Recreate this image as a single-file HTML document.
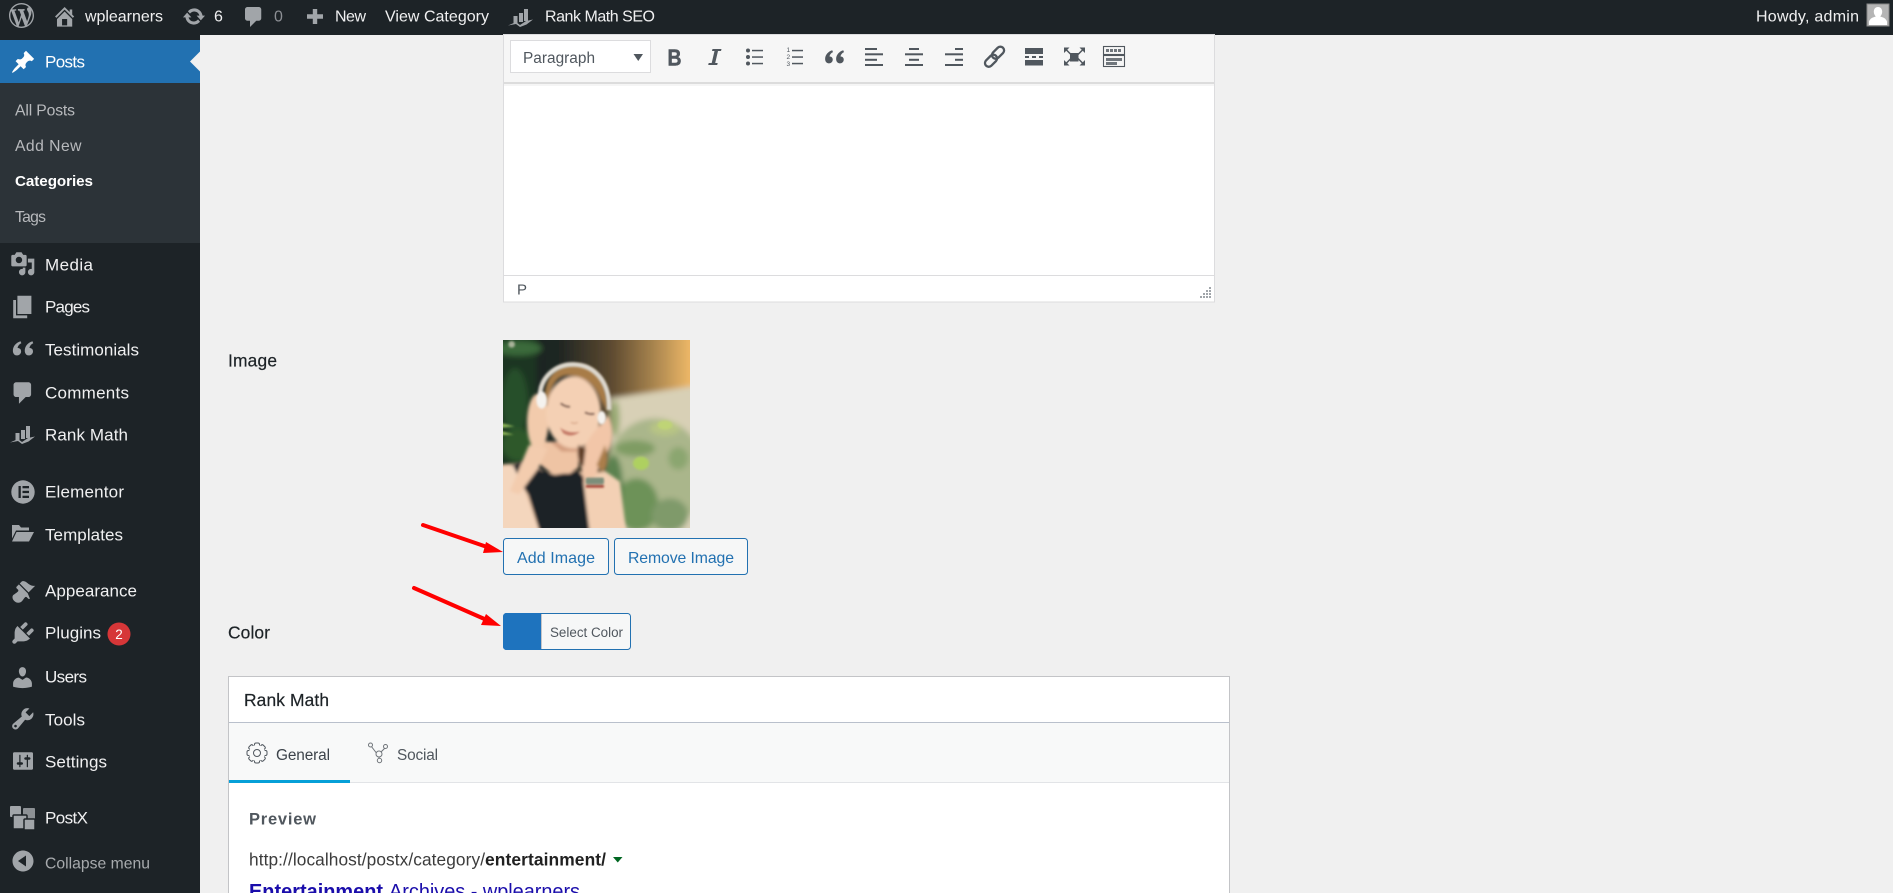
<!DOCTYPE html>
<html lang="en">
<head>
<meta charset="utf-8">
<title>Edit Category</title>
<style>
html,body{margin:0;padding:0;background:#f0f0f0;overflow:hidden}
svg{display:block;font-family:"Liberation Sans",Arial,sans-serif}
.m{font-size:17px;fill:#f0f0f1}
.s{font-size:15.7px;fill:#b8babd}
.a{font-size:16px;fill:#f0f0f1}
.i{fill:#a1a5a9}
.t{fill:#50575e}
</style>
</head>
<body>
<svg width="1893" height="893" viewBox="0 0 1893 893" xmlns="http://www.w3.org/2000/svg">
<defs>
<filter id="b" x="-5%" y="-5%" width="110%" height="110%"><feGaussianBlur stdDeviation="9"/></filter>
<filter id="p" x="-5%" y="-5%" width="110%" height="110%"><feGaussianBlur stdDeviation="5"/></filter>
<filter id="b2" x="-5%" y="-5%" width="110%" height="110%"><feGaussianBlur stdDeviation="3"/></filter>
<clipPath id="ic"><rect x="24" y="15" width="561" height="564"/></clipPath>
<linearGradient id="sky" gradientUnits="userSpaceOnUse" x1="24" x2="585" y1="0" y2="0"><stop offset="0" stop-color="#15231b"/><stop offset=".3" stop-color="#1f2523"/><stop offset=".58" stop-color="#5d4a30"/><stop offset=".82" stop-color="#ad8850"/><stop offset="1" stop-color="#edb767"/></linearGradient>
<path id="quote" d="M8.200 5C5 6 2.500 8.600 2.500 12c0 2 1.200 3.500 3 3.500S8.600 14.200 8.600 12.500 7.400 10 6 10c.2-1.500 1.200-2.800 2.800-3.500zM17 5c-3.200 1-5.700 3.600-5.700 7 0 2 1.200 3.500 3 3.500s3.100-1.300 3.100-3S16.200 10 14.800 10c.2-1.500 1.200-2.800 2.800-3.500z"/>
<path id="cmt" d="M5 2h9c1.100 0 2 .9 2 2v7c0 1.100-.9 2-2 2h-2l-5 5v-5H5c-1.100 0-2-.9-2-2V4c0-1.100.9-2 2-2z"/>
<g id="rm"><rect x="5.500" y="7" width="4" height="7"/><rect x="11" y="4" width="4" height="9"/><rect x="16" y="0" width="4" height="12"/><path d="M0 16.500L8 13l4 3 6-4 7-1.500-6.500 5L12 18 8 15z"/></g>
</defs>

<!-- page -->
<rect width="1893" height="893" fill="#f0f0f0"/>

<!-- admin bar -->
<rect width="1893" height="35" fill="#1d2327"/>
<g class="i">
<g transform="translate(9,3) scale(1.250)"><path d="M20 10c0-5.510-4.490-10-10-10C4.480 0 0 4.490 0 10c0 5.520 4.480 10 10 10 5.510 0 10-4.480 10-10zM7.780 15.370L4.370 6.220c.55-.02 1.170-.08 1.170-.08.5-.06.44-1.130-.06-1.110 0 0-1.450.11-2.370.11-.18 0-.37 0-.58-.01C4.120 2.690 6.870 1.110 10 1.110c2.330 0 4.450.87 6.050 2.340-.68-.11-1.650.39-1.650 1.580 0 .74.45 1.360.9 2.100.35.61.55 1.360.55 2.460 0 1.490-1.400 5-1.400 5l-3.030-8.370c.54-.02.82-.17.82-.17.5-.05.44-1.250-.06-1.220 0 0-1.440.12-2.380.12-.87 0-2.330-.12-2.330-.12-.5-.03-.56 1.200-.06 1.220l.92.08 1.260 3.410zM17.410 10c.24-.64.74-1.870.43-4.250.7 1.290 1.050 2.710 1.050 4.250 0 3.290-1.730 6.240-4.400 7.780.97-2.590 1.940-5.200 2.920-7.780zM6.100 18.090C3.120 16.650 1.110 13.530 1.110 10c0-1.300.23-2.480.72-3.590C3.250 10.300 4.670 14.200 6.100 18.090zm4.030-6.630l2.580 6.980c-.86.29-1.760.45-2.710.45-.79 0-1.570-.11-2.290-.33.81-2.380 1.620-4.740 2.420-7.100z"/></g>
<g transform="translate(51.900,3.800) scale(1.270)"><path d="M16 8.500l1.530 1.530-1.060 1.060L10 4.620l-6.470 6.470-1.060-1.060L10 2.500l4 4v-2h2v4zm-6-2.460l6 5.990V18H4v-5.970zM12 17v-5H8v5h4z"/></g>
<g transform="translate(182,4.500) scale(1.200)"><path d="M10.200 3.280c3.530 0 6.430 2.610 6.920 6h2.080l-3.500 4-3.500-4h2.320c-.45-1.970-2.210-3.450-4.320-3.450-1.450 0-2.730.71-3.540 1.780L4.950 5.660C6.230 4.200 8.110 3.280 10.200 3.280zm-.4 13.440c-3.520 0-6.430-2.610-6.920-6H.8l3.500-4c1.170 1.330 2.330 2.670 3.500 4H5.480c.45 1.970 2.210 3.450 4.320 3.450 1.450 0 2.730-.71 3.540-1.780l1.710 1.950c-1.280 1.460-3.150 2.380-5.250 2.380z"/></g>
<g transform="translate(241.250,4.500) scale(1.250)"><use href="#cmt"/></g>
<path d="M312.800 9h4.400v5.300h5.800v4.400h-5.800V24h-4.400v-5.300H307v-4.400h5.800z"/>
<g transform="translate(508,9)"><use href="#rm"/></g>
</g>
<text class="a" x="85" y="21.500" textLength="78" lengthAdjust="spacing">wplearners</text>
<text class="a" x="214" y="21.500" textLength="9">6</text>
<text class="a" x="274" y="21.500" textLength="9" style="fill:#8c8f94">0</text>
<text class="a" x="335" y="21.500" textLength="31" lengthAdjust="spacing">New</text>
<text class="a" x="385" y="21.500" textLength="104" lengthAdjust="spacing">View Category</text>
<text class="a" x="545" y="21.500" textLength="110" lengthAdjust="spacing">Rank Math SEO</text>
<text class="a" x="1756" y="21.500" textLength="103" lengthAdjust="spacing">Howdy, admin</text>
<rect x="1867" y="4" width="22" height="22" fill="#b5b5b5" stroke="#888" stroke-width="1"/>
<path d="M1878 7c2.800 0 4.200 2.200 4.200 4.800 0 2-1 3.700-2 4.700 3 .8 5.800 2 6.800 5v3.500h-18V21.500c1-3 3.800-4.200 6.800-5-1-1-2-2.700-2-4.700 0-2.600 1.400-4.800 4.200-4.800z" fill="#fff"/>

<!-- sidebar -->
<rect y="35" width="200" height="858" fill="#1d2327"/>
<rect y="40" width="200" height="43" fill="#2271b1"/>
<path d="M200 51.500l-10 10 10 10z" fill="#f0f0f0"/>
<rect y="83" width="200" height="160" fill="#2c3338"/>
<g transform="translate(10.300,49.200) scale(1.280)" fill="#fff"><path d="M10.440 3.020l1.820-1.820 6.360 6.350-1.830 1.820c-1.050-.68-2.480-.57-3.410.36l-.75.75c-.92.93-1.040 2.350-.35 3.410l-1.830 1.820-2.410-2.410-2.800 2.790c-.42.42-3.380 2.710-3.800 2.290s1.860-3.390 2.280-3.810l2.790-2.790L4.100 9.360l1.830-1.820c1.050.69 2.480.57 3.400-.36l.75-.75c.93-.92 1.050-2.350.36-3.410z"/></g>
<text class="m" x="45" y="67.500" textLength="40" lengthAdjust="spacing" style="fill:#fff">Posts</text>
<text class="s" x="15" y="115.500" textLength="60" lengthAdjust="spacing">All Posts</text>
<text class="s" x="15" y="151" textLength="66.500" lengthAdjust="spacing">Add New</text>
<text class="s" x="15" y="186" textLength="78" lengthAdjust="spacing" style="fill:#fff;font-weight:700;font-size:15.200px">Categories</text>
<text class="s" x="15" y="222" textLength="31" lengthAdjust="spacing">Tags</text>

<g class="i">
<g transform="translate(10,251) scale(1.280)"><path d="M13 11V4c0-.55-.45-1-1-1h-1.670L9 1H5L3.670 3H2c-.55 0-1 .45-1 1v7c0 .55.45 1 1 1h10c.55 0 1-.45 1-1zM7 4.500c1.380 0 2.500 1.120 2.500 2.500S8.380 9.500 7 9.500 4.500 8.380 4.500 7 5.620 4.500 7 4.500zM14 6h5v10.500c0 1.380-1.120 2.500-2.500 2.500S14 17.880 14 16.500s1.120-2.500 2.500-2.500c.17 0 .34.02.5.05V9h-3V6zm-4 8.050V13h2v3.500c0 1.380-1.120 2.500-2.500 2.500S7 17.880 7 16.500 8.120 14 9.500 14c.17 0 .34.02.5.05z"/></g>
<g transform="translate(9,293) scale(1.400)"><path d="M6 15V2h10v13H6zm-1 1h8v2H3V5h2v11z"/></g>
<g transform="translate(9.500,334.500) scale(1.350)"><use href="#quote"/></g>
<g transform="translate(9.500,379.500) scale(1.350)"><use href="#cmt"/></g>
<g transform="translate(10,426)"><use href="#rm"/></g>
<g><circle cx="23" cy="492" r="11.700"/><rect x="18.500" y="486" width="2.300" height="12" fill="#1d2327"/><rect x="22.500" y="486" width="6.500" height="2.300" fill="#1d2327"/><rect x="22.500" y="490.800" width="6.500" height="2.300" fill="#1d2327"/><rect x="22.500" y="495.700" width="6.500" height="2.300" fill="#1d2327"/></g>
<path d="M12 525h7l2 2.500h8v3H16l-4 8zM16.500 532h17.500l-5 9.500H12z"/>
<g transform="translate(10.500,578.500) scale(1.250)"><path d="M14.480 11.060L7.410 3.990l1.500-1.500c.5-.56 2.300-.47 3.510.32 1.210.8 1.430 1.280 2.910 2.100 1.180.64 2.450 1.260 4.450.85zm-.71.71L6.700 4.700 4.930 6.470c-.39.39-.39 1.020 0 1.410l1.060 1.060c.39.39.39 1.030 0 1.420-.6.6-1.430 1.110-2.210 1.690-.35.26-.7.53-1.010.84C1.430 13.230.91 15.960 3 18c2.040 2.090 4.770 1.570 6.110.22.31-.31.58-.66.84-1.010.58-.78 1.090-1.610 1.690-2.210.39-.39 1.030-.39 1.420 0l1.060 1.060c.39.39 1.020.39 1.410 0z"/></g>
<g transform="translate(9,619) scale(1.400)"><path d="M13.110 4.360L9.870 7.600 8 5.730l3.240-3.240c.35-.34 1.050-.2 1.560.32.52.51.66 1.210.31 1.550zm-8 1.770l.91-1.120 9.010 9.010-1.190.84c-.71.71-2.630 1.160-3.820 1.160H6.140L4.900 17.260c-.59.59-1.540.59-2.120 0-.59-.58-.59-1.530 0-2.120l1.240-1.240v-3.880c0-1.130.4-3.190 1.090-3.890zm7.260 3.970l3.240-3.240c.34-.35 1.040-.21 1.550.31.52.51.66 1.210.31 1.550l-3.240 3.250z"/></g>
<g transform="translate(9.500,664.500) scale(1.300)"><path d="M10 9.250c-2.270 0-2.730-3.440-2.730-3.440C7 4.020 7.820 2 9.970 2c2.160 0 2.980 2.020 2.710 3.810 0 0-.41 3.440-2.680 3.440zm0 2.570L12.720 10c2.390 0 4.520 2.330 4.520 4.530v2.490s-3.650 1.130-7.240 1.130c-3.650 0-7.240-1.130-7.240-1.130v-2.490c0-2.250 1.940-4.480 4.470-4.480z"/></g>
<g transform="translate(9.500,705.500) scale(1.330)"><path d="M16.680 9.770c-1.340 1.340-3.300 1.670-4.950.99l-5.410 6.520c-.99.99-2.590.99-3.580 0s-.99-2.590 0-3.570l6.520-5.420c-.68-1.650-.35-3.610.99-4.950 1.280-1.280 3.120-1.620 4.720-1.060l-2.890 2.890 2.820 2.820 2.860-2.870c.53 1.580.18 3.390-1.080 4.650zM3.810 16.210c.4.390 1.040.39 1.430 0 .4-.4.4-1.040 0-1.440-.39-.39-1.030-.39-1.430 0-.39.4-.39 1.040 0 1.440z"/></g>
<g transform="translate(10.500,748.500) scale(1.250)"><path d="M18 16V4c0-.55-.45-1-1-1H3c-.55 0-1 .45-1 1v12c0 .55.45 1 1 1h14c.55 0 1-.45 1-1zM8 11h1c.55 0 1 .45 1 1s-.45 1-1 1H8v1.500c0 .28-.22.5-.5.5s-.5-.22-.5-.5V13H6c-.55 0-1-.45-1-1s.45-1 1-1h1V5.500c0-.28.22-.5.5-.5s.5.22.5.5V11zm5-2h-1c-.55 0-1-.45-1-1s.45-1 1-1h1V5.500c0-.28.22-.5.5-.5s.5.22.5.5V7h1c.55 0 1 .45 1 1s-.45 1-1 1h-1v5.500c0 .28-.22.5-.5.5s-.5-.22-.5-.5V9z"/></g>
<g><rect x="10" y="806" width="11" height="11" rx="1"/><rect x="23" y="808" width="12" height="11"  rx="1" opacity=".85"/><rect x="13" y="815" width="14" height="14" rx="1" stroke="#1d2327" stroke-width="1.500"/><rect x="24" y="819" width="11" height="11" rx="1" stroke="#1d2327" stroke-width="1.500"/></g>
<path fill-rule="evenodd" d="M23 850.500c5.800 0 10.500 4.700 10.500 10.500s-4.700 10.500-10.500 10.500-10.500-4.700-10.500-10.500 4.700-10.500 10.500-10.500zM26 855.500l-8 5.500 8 5.500z"/>
</g>
<text class="m" x="45" y="270.500" textLength="48" lengthAdjust="spacing">Media</text>
<text class="m" x="45" y="312.500" textLength="45" lengthAdjust="spacing">Pages</text>
<text class="m" x="45" y="355.500" textLength="94" lengthAdjust="spacing">Testimonials</text>
<text class="m" x="45" y="398.500" textLength="84" lengthAdjust="spacing">Comments</text>
<text class="m" x="45" y="440.500" textLength="83" lengthAdjust="spacing">Rank Math</text>
<text class="m" x="45" y="497.500" textLength="79" lengthAdjust="spacing">Elementor</text>
<text class="m" x="45" y="540.500" textLength="78" lengthAdjust="spacing">Templates</text>
<text class="m" x="45" y="596.500" textLength="92" lengthAdjust="spacing">Appearance</text>
<text class="m" x="45" y="638.500" textLength="56" lengthAdjust="spacing">Plugins</text>
<circle cx="119" cy="634" r="11.500" fill="#d63638"/>
<text x="119" y="639" text-anchor="middle" font-size="13.500" fill="#fff">2</text>
<text class="m" x="45" y="682.500" textLength="42" lengthAdjust="spacing">Users</text>
<text class="m" x="45" y="725.500" textLength="40" lengthAdjust="spacing">Tools</text>
<text class="m" x="45" y="767.500" textLength="62" lengthAdjust="spacing">Settings</text>
<text class="m" x="45" y="823.500" textLength="43" lengthAdjust="spacing">PostX</text>
<text class="s" x="45" y="868.500" textLength="105" lengthAdjust="spacing" style="fill:#a7aaad">Collapse menu</text>

<!-- editor -->
<rect x="503.500" y="34.500" width="711" height="267.500" fill="#fff" stroke="#dcdcde"/>
<rect x="504" y="35" width="710" height="47" fill="#f6f6f6"/>
<rect x="504" y="82" width="710" height="2" fill="#dcdcdc"/>
<rect x="504" y="84" width="710" height="2" fill="#f5f5f5"/>
<rect x="510.500" y="40.500" width="140" height="32" fill="#fff" stroke="#dcdcde"/>
<text x="523" y="63" font-size="15.400" fill="#50575e" textLength="72" lengthAdjust="spacing">Paragraph</text>
<path d="M633.500 54h9.500l-4.750 7z" fill="#50575e"/>
<text x="667.500" y="65.500" font-size="23" font-weight="700" fill="#50575e" stroke="#50575e" stroke-width=".5" textLength="14" lengthAdjust="spacingAndGlyphs">B</text>
<g class="t">
<path d="M712.500 49h9l-.5 2h-3l-2.800 12h2.500l-.5 2h-9l.5-2h3l2.800-12h-2.500z"/>
<circle cx="748" cy="50.500" r="2"/><circle cx="748" cy="57" r="2"/><circle cx="748" cy="63.500" r="2"/>
<rect x="752" y="49.800" width="11" height="1.500"/><rect x="752" y="56.300" width="11" height="1.500"/><rect x="752" y="62.800" width="11" height="1.500"/>
<text x="786.500" y="52" font-size="6.500">1</text><text x="786.500" y="59" font-size="6.500">2</text><text x="786.500" y="66" font-size="6.500">3</text>
<rect x="792" y="49.800" width="11" height="1.500"/><rect x="792" y="56.300" width="11" height="1.500"/><rect x="792" y="62.800" width="11" height="1.500"/>
<g transform="translate(822,44) scale(1.250)"><use href="#quote"/></g>
<rect x="865" y="48" width="12" height="2"/><rect x="865" y="53.300" width="18" height="2"/><rect x="865" y="58.800" width="12" height="2"/><rect x="865" y="64" width="18" height="2"/>
<rect x="909" y="48" width="10" height="2"/><rect x="905" y="53.300" width="18" height="2"/><rect x="909" y="58.800" width="10" height="2"/><rect x="905" y="64" width="18" height="2"/>
<rect x="955" y="48" width="8" height="2"/><rect x="945" y="53.300" width="18" height="2"/><rect x="955" y="58.800" width="8" height="2"/><rect x="945" y="64" width="18" height="2"/>
<rect x="1025" y="48" width="18" height="6"/><rect x="1025" y="56" width="4" height="2"/><rect x="1032" y="56" width="4" height="2"/><rect x="1039" y="56" width="4" height="2"/><rect x="1025" y="60" width="18" height="5.500"/>
<rect x="1070" y="53" width="8.500" height="8.500"/>
<path d="M1064 47.500h5.500l-5.500 5.500zM1085 47.500v5.500l-5.500-5.500zM1064 65.500v-5.500l5.500 5.500zM1085 65.500h-5.500l5.500-5.500z"/>
<path d="M1066 49.500l5 5M1083 49.500l-5 5M1066 63.500l5-5M1083 63.500l-5-5" stroke="#50575e" stroke-width="1.500"/>
<g fill="none" stroke="#50575e" stroke-width="1.100"><rect x="1103.500" y="46.500" width="21" height="8"/><rect x="1103.500" y="55.500" width="21" height="11"/></g>
<g fill="#70767c"><rect x="1106" y="49" width="3" height="3"/><rect x="1110" y="49" width="3" height="3"/><rect x="1114" y="49" width="3" height="3"/><rect x="1118" y="49" width="3" height="3"/><rect x="1106" y="58" width="16" height="3"/><rect x="1106" y="62" width="11" height="3"/></g>
</g>
<g fill="none" stroke="#50575e" stroke-width="2.300"><rect x="984" y="57" width="14" height="7.500" rx="3.700" transform="rotate(-45 991 60.700)"/><rect x="991" y="49" width="14" height="7.500" rx="3.700" transform="rotate(-45 998 52.700)"/></g>
<rect x="504" y="275" width="710" height="1" fill="#dcdcde"/>
<text x="517" y="294.500" font-size="15" fill="#50575e">P</text>
<g fill="#a0a5aa"><rect x="1209" y="287" width="2" height="2"/><rect x="1206" y="290" width="2" height="2"/><rect x="1209" y="290" width="2" height="2"/><rect x="1203" y="293" width="2" height="2"/><rect x="1206" y="293" width="2" height="2"/><rect x="1209" y="293" width="2" height="2"/><rect x="1200" y="296" width="2" height="2"/><rect x="1203" y="296" width="2" height="2"/><rect x="1206" y="296" width="2" height="2"/><rect x="1209" y="296" width="2" height="2"/></g>

<!-- image row -->
<text x="228" y="366.500" font-size="17.400" fill="#1d2327" stroke="#1d2327" stroke-width=".2" textLength="49" lengthAdjust="spacing">Image</text>
<g transform="translate(495,335) scale(.33333)" clip-path="url(#ic)">
<g filter="url(#b)">
<rect x="-40" y="-40" width="700" height="700" fill="url(#sky)"/>
<path d="M345 190L640 147V660H345z" fill="#d8d0b6"/>
<rect x="-40" y="-40" width="165" height="435" fill="#1a3523"/>
<ellipse cx="70" cy="40" rx="70" ry="22" fill="#3a6a3a"/>
<ellipse cx="60" cy="200" rx="38" ry="100" fill="#264f2a"/>
<ellipse cx="70" cy="330" rx="50" ry="50" fill="#2e582c"/>
<ellipse cx="480" cy="420" rx="150" ry="170" fill="#aab68b"/>
<ellipse cx="420" cy="340" rx="60" ry="24" fill="#7f9c63"/>
<ellipse cx="510" cy="280" rx="45" ry="22" fill="#b8c584"/>
<ellipse cx="550" cy="370" rx="30" ry="34" fill="#8ba66f"/>
<ellipse cx="425" cy="510" rx="65" ry="80" fill="#6d9258"/>
<ellipse cx="525" cy="540" rx="55" ry="50" fill="#7f9a6a"/>
<ellipse cx="360" cy="250" rx="14" ry="55" fill="#99aa73"/>
<ellipse cx="355" cy="450" rx="28" ry="90" fill="#5b8250"/>
</g>
<g filter="url(#b2)">
<path d="M10 262l49 12-49 6zM10 285l46 14-46 2z" fill="#8ab257"/>
<ellipse cx="50" cy="28" rx="10" ry="10" fill="#a9b39a"/>
<ellipse cx="438" cy="385" rx="24" ry="20" fill="#aed060"/>
<ellipse cx="510" cy="270" rx="22" ry="14" fill="#bfd476"/>
</g>
<g filter="url(#p)">
<path d="M-20 392L60 385 105 372 150 415 250 410 330 410 300 640H-20z" fill="#ecc5a6"/>
<path d="M46 392L100 372 140 408 180 420 250 408 278 440 295 640H150L100 480z" fill="#1a2228"/>
<path d="M-20 395L55 392 90 470 150 640H-20z" fill="#f4d6bd"/>
<path d="M330 408L375 440 400 640H290L265 440z" fill="#f3d0b4"/>
<path d="M150 320L255 320 250 398 225 416 170 416 115 372z" fill="#efc4a4"/>
<path d="M165 320L250 330 245 350 200 350z" fill="#d49f80"/>
<ellipse cx="128" cy="262" rx="32" ry="85" fill="#f2cbac"/>
<path d="M102 330L158 340 130 400 72 478 45 468z" fill="#f3ccae"/>
<ellipse cx="235" cy="232" rx="82" ry="108" fill="#f4d0b4"/>
<path d="M340 240C362 290 350 340 328 365L290 445 268 445 252 360 290 300z" fill="#f2c6a8"/>
<path d="M147 205C147 125 180 88 240 88S338 130 338 230L318 195C300 145 262 118 212 122 182 126 168 160 155 205z" fill="#a87c46"/>
<path d="M330 330C342 370 337 400 322 412L305 390z" fill="#aa7e4c"/>
<path d="M250 330C245 360 250 385 265 395L272 340z" fill="#5e3d28"/>
</g>
<g filter="url(#b2)">
<path d="M135 190C130 58 348 40 342 225" fill="none" stroke="#ddd8ce" stroke-width="14"/>
<ellipse cx="140" cy="195" rx="16" ry="26" fill="#f5f3ef"/>
<ellipse cx="320" cy="248" rx="13" ry="20" fill="#f5f3ef"/>
<path d="M197 205q15 12 28 10M270 232q14 8 28 4" fill="none" stroke="#7a5c4f" stroke-width="5"/>
<path d="M195 278q25 20 60 12 -25 20-50 5z" fill="#c57a68"/>
<path d="M228 262q10 6 20 0" fill="none" stroke="#d9a98c" stroke-width="4"/>
<rect x="272" y="428" width="55" height="20" fill="#7b8d7a" rx="5"/>
<rect x="272" y="450" width="55" height="8" fill="#a03c30" rx="3"/>
</g>
</g>

<!-- buttons -->
<rect x="503.500" y="538.500" width="105" height="36" rx="3" fill="#f6f7f7" stroke="#2271b1"/>
<text x="517" y="563" font-size="16" fill="#2271b1" textLength="78" lengthAdjust="spacing">Add Image</text>
<rect x="614.500" y="538.500" width="133" height="36" rx="3" fill="#f6f7f7" stroke="#2271b1"/>
<text x="628" y="563" font-size="15.800" fill="#2271b1" textLength="106" lengthAdjust="spacing">Remove Image</text>
<rect x="503.500" y="613.500" width="127" height="36" rx="3" fill="#f6f7f7" stroke="#2271b1"/>
<path d="M506.500 613H541V650H506.500a3.500 3.500 0 0 1-3.500-3.500V616.500a3.500 3.500 0 0 1 3.500-3.500z" fill="#1e73be"/>
<rect x="541" y="614" width="1" height="35" fill="#c3c4c7"/>
<text x="550" y="637" font-size="13.400" fill="#50575e" textLength="73" lengthAdjust="spacing">Select Color</text>
<text x="228" y="638.500" font-size="17.400" fill="#1d2327" stroke="#1d2327" stroke-width=".2" textLength="42" lengthAdjust="spacing">Color</text>

<!-- arrows -->
<path d="M423 525L490 548" stroke="#f00" stroke-width="4" stroke-linecap="round"/>
<path d="M503 552L483 553 486 542z" fill="#f00"/>
<path d="M414 588L489 621" stroke="#f00" stroke-width="4" stroke-linecap="round"/>
<path d="M501 626L481 625 486 614z" fill="#f00"/>

<!-- rank math panel -->
<rect x="228.500" y="676.500" width="1001" height="230" fill="#fff" stroke="#c3c4c7"/>
<text x="244" y="706" font-size="17.400" fill="#1d2327" stroke="#1d2327" stroke-width=".2" textLength="85" lengthAdjust="spacing">Rank Math</text>
<rect x="229" y="722" width="1000" height="1" fill="#b9c0cc"/>
<rect x="229" y="723" width="1000" height="59" fill="#f8f9f9"/>
<rect x="229" y="782" width="1000" height="1" fill="#e2e4e7"/>
<rect x="229" y="780" width="121" height="3" fill="#06a0d8"/>
<g transform="translate(257,753)" fill="#f8f9f9" stroke="#50575e" stroke-width="1">
<rect x="-2.500" y="-10" width="5" height="20" rx="1.500"/>
<rect x="-2.500" y="-10" width="5" height="20" rx="1.500" transform="rotate(45)"/>
<rect x="-2.500" y="-10" width="5" height="20" rx="1.500" transform="rotate(90)"/>
<rect x="-2.500" y="-10" width="5" height="20" rx="1.500" transform="rotate(135)"/>
<circle r="8" stroke="none"/><circle r="3.500"/>
</g>
<text x="276" y="760" font-size="15.400" fill="#3c434a" textLength="54" lengthAdjust="spacing">General</text>
<g fill="#f8f9f9" stroke="#70757a" stroke-width="1">
<path d="M371 746L378 755 387 746M379 755v5" fill="none"/>
<circle cx="370.500" cy="745" r="2"/><circle cx="385.500" cy="746.500" r="2"/><circle cx="379" cy="754" r="3"/><circle cx="379.500" cy="760.500" r="2.200"/>
</g>
<text x="397" y="760" font-size="15.400" fill="#50575e" textLength="41" lengthAdjust="spacing">Social</text>
<text x="249" y="824.500" font-size="16.500" font-weight="700" fill="#50575e" textLength="67" lengthAdjust="spacing">Preview</text>
<text x="249" y="865.500" font-size="17.300" fill="#3c3c3c" textLength="236" lengthAdjust="spacing">http://localhost/postx/category/</text>
<text x="485" y="865.500" font-size="17.400" font-weight="700" fill="#212121" textLength="121" lengthAdjust="spacing">entertainment/</text>
<path d="M613 857h9.500l-4.750 5.500z" fill="#006621"/>
<text x="249" y="898" font-size="19.900" font-weight="700" fill="#1a0dab" textLength="134" lengthAdjust="spacing">Entertainment</text>
<text x="389" y="898" font-size="19.900" fill="#1a0dab" textLength="191" lengthAdjust="spacing">Archives - wplearners</text>
</svg>
</body>
</html>
